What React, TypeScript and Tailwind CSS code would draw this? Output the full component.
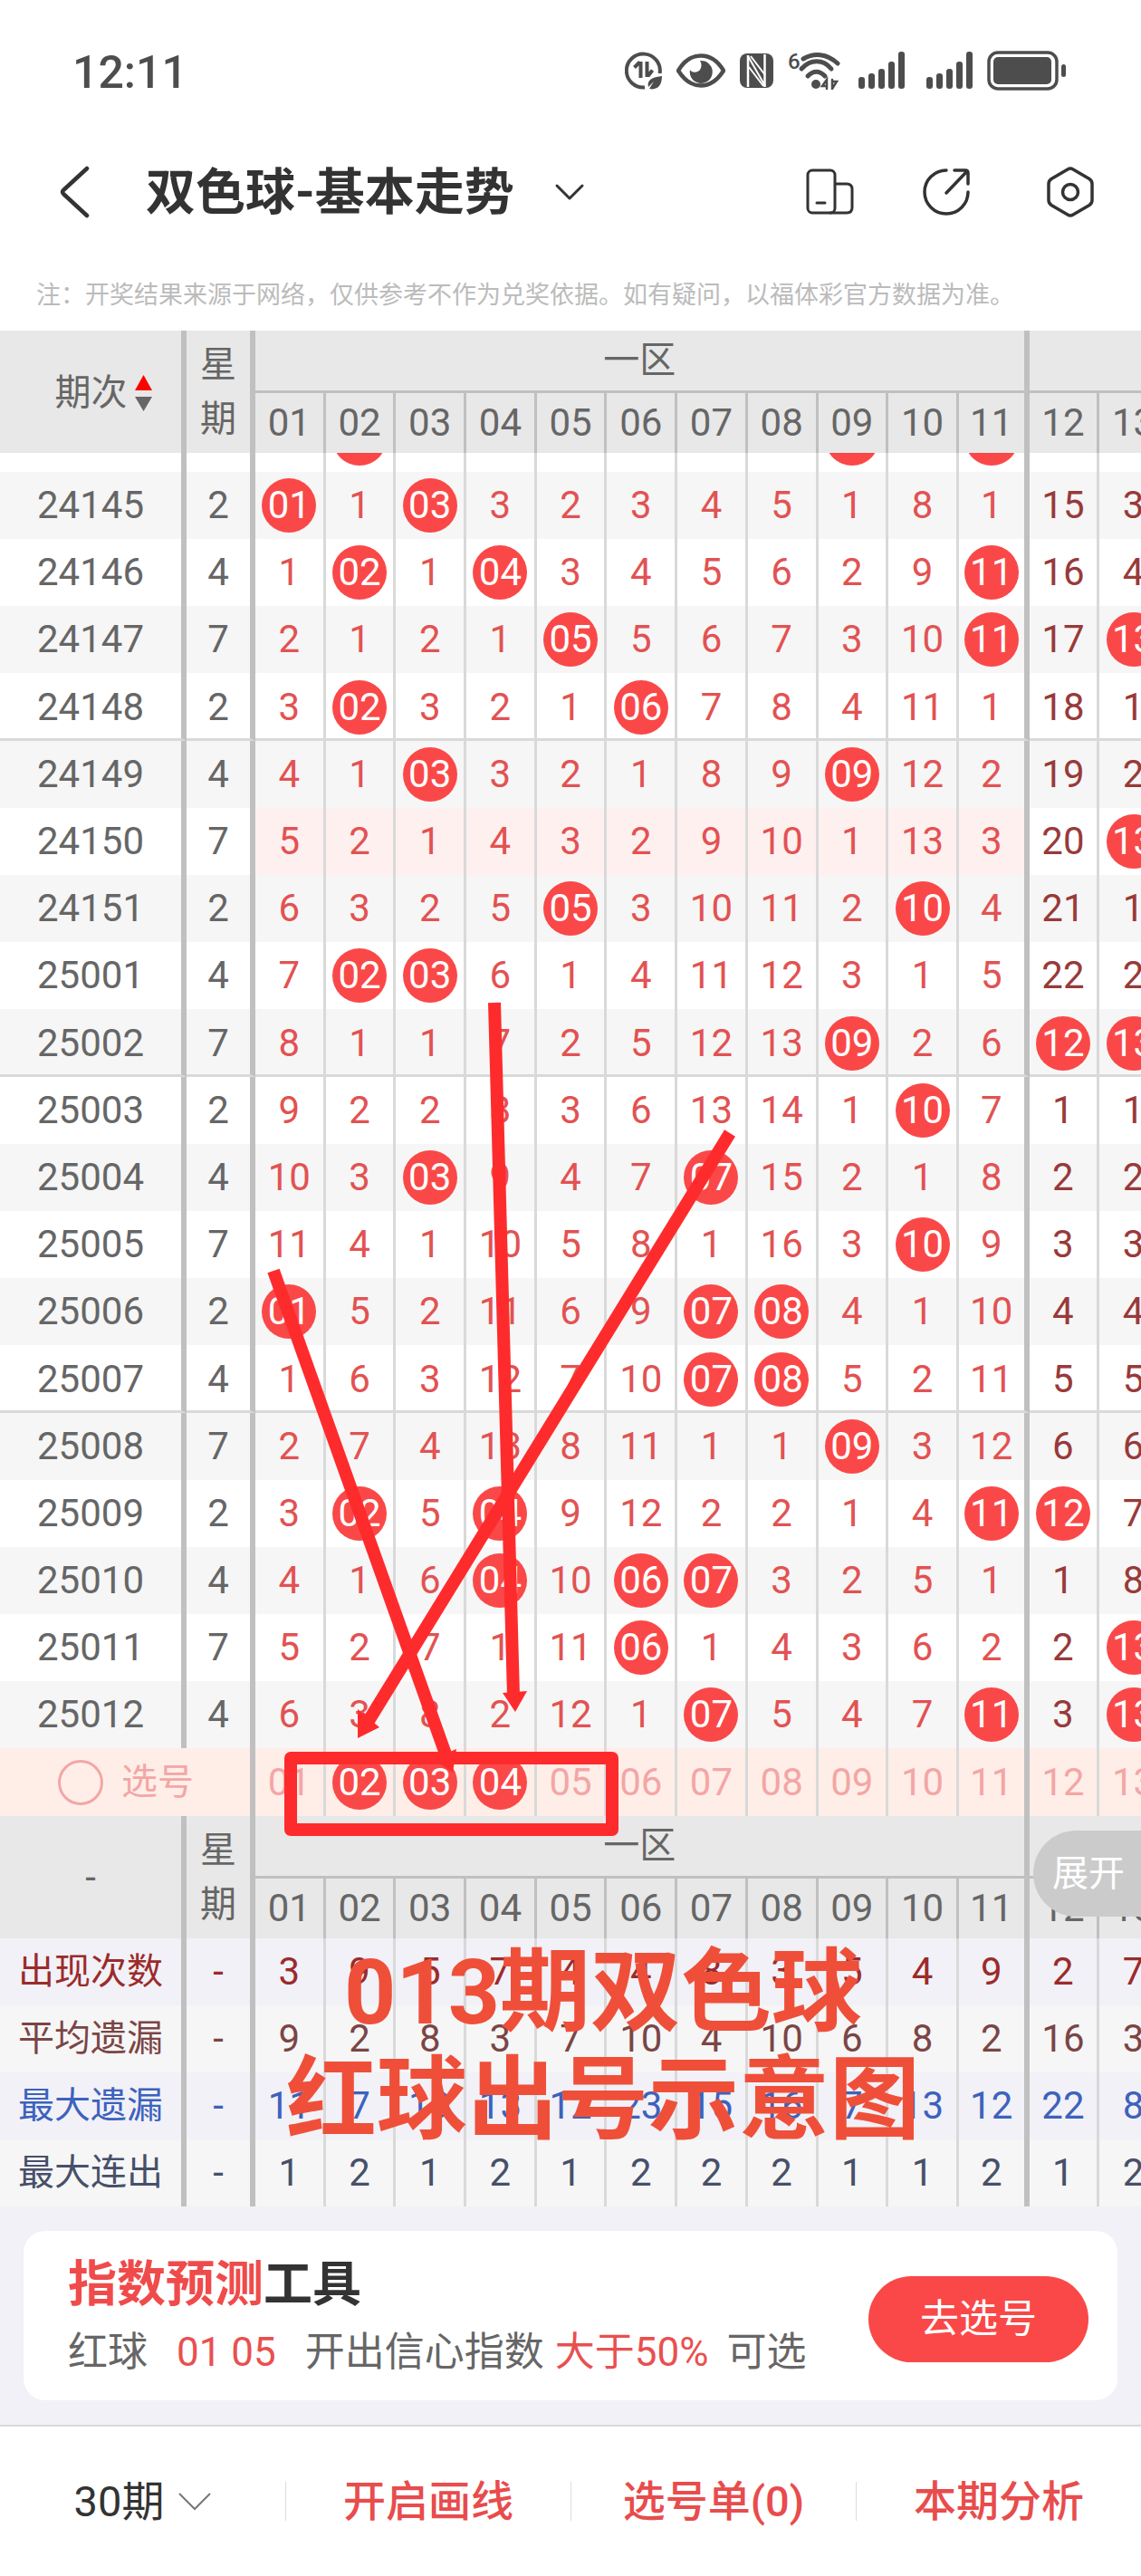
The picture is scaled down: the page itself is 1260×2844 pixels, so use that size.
import { useState } from 'react'
import type { ReactNode } from 'react'

interface Draw {
  issue: string
  day: number
  // misses per number, 0 means the number was drawn
  cells: number[]
}

interface StatRow {
  label: string
  className: string
  values: number[]
}

const NUMBERS = ['01', '02', '03', '04', '05', '06', '07', '08', '09', '10', '11', '12', '13']

const ZONE_ONE = 11

const draws: Draw[] = [
  { issue: '24145', day: 2, cells: [0, 1, 0, 3, 2, 3, 4, 5, 1, 8, 1, 15, 3] },
  { issue: '24146', day: 4, cells: [1, 0, 1, 0, 3, 4, 5, 6, 2, 9, 0, 16, 4] },
  { issue: '24147', day: 7, cells: [2, 1, 2, 1, 0, 5, 6, 7, 3, 10, 0, 17, 0] },
  { issue: '24148', day: 2, cells: [3, 0, 3, 2, 1, 0, 7, 8, 4, 11, 1, 18, 1] },
  { issue: '24149', day: 4, cells: [4, 1, 0, 3, 2, 1, 8, 9, 0, 12, 2, 19, 2] },
  { issue: '24150', day: 7, cells: [5, 2, 1, 4, 3, 2, 9, 10, 1, 13, 3, 20, 0] },
  { issue: '24151', day: 2, cells: [6, 3, 2, 5, 0, 3, 10, 11, 2, 0, 4, 21, 1] },
  { issue: '25001', day: 4, cells: [7, 0, 0, 6, 1, 4, 11, 12, 3, 1, 5, 22, 2] },
  { issue: '25002', day: 7, cells: [8, 1, 1, 7, 2, 5, 12, 13, 0, 2, 6, 0, 0] },
  { issue: '25003', day: 2, cells: [9, 2, 2, 8, 3, 6, 13, 14, 1, 0, 7, 1, 1] },
  { issue: '25004', day: 4, cells: [10, 3, 0, 9, 4, 7, 0, 15, 2, 1, 8, 2, 2] },
  { issue: '25005', day: 7, cells: [11, 4, 1, 10, 5, 8, 1, 16, 3, 0, 9, 3, 3] },
  { issue: '25006', day: 2, cells: [0, 5, 2, 11, 6, 9, 0, 0, 4, 1, 10, 4, 4] },
  { issue: '25007', day: 4, cells: [1, 6, 3, 12, 7, 10, 0, 0, 5, 2, 11, 5, 5] },
  { issue: '25008', day: 7, cells: [2, 7, 4, 13, 8, 11, 1, 1, 0, 3, 12, 6, 6] },
  { issue: '25009', day: 2, cells: [3, 0, 5, 0, 9, 12, 2, 2, 1, 4, 0, 0, 7] },
  { issue: '25010', day: 4, cells: [4, 1, 6, 0, 10, 0, 0, 3, 2, 5, 1, 1, 8] },
  { issue: '25011', day: 7, cells: [5, 2, 7, 1, 11, 0, 1, 4, 3, 6, 2, 2, 0] },
  { issue: '25012', day: 4, cells: [6, 3, 8, 2, 12, 1, 0, 5, 4, 7, 0, 3, 0] },
]

const stats: StatRow[] = [
  { label: '出现次数', className: 'bg-[#f1f1f7] text-[#9b2b2b]', values: [3, 9, 5, 7, 4, 4, 8, 3, 5, 4, 9, 2, 7] },
  { label: '平均遗漏', className: 'bg-[#f6f6f6] text-[#7b4545]', values: [9, 2, 8, 3, 7, 10, 4, 10, 6, 8, 2, 16, 3] },
  { label: '最大遗漏', className: 'bg-[#f1f1f7] text-[#3d62bd]', values: [11, 7, 19, 13, 12, 23, 15, 16, 7, 13, 12, 22, 8] },
  { label: '最大连出', className: 'bg-[#f6f6f6] text-[#475069]', values: [1, 2, 1, 2, 1, 2, 2, 2, 1, 1, 2, 1, 2] },
]

// the last column of a zone gets the thick divider
const bodyLine = (i: number) =>
  i === ZONE_ONE - 1 ? 'border-r-[6px] border-r-[#c0c0c0]' : 'border-r-[3px] border-r-[#d9d9d9]'

const headLine = (i: number) =>
  i === ZONE_ONE - 1 ? 'border-r-[6px] border-r-[#c0c0c0]' : 'border-r-[3px] border-r-[#c0c0c0]'

function StatusBar() {
  return (
    <div className="flex h-[156px] items-center justify-between pl-20 pr-[83px] text-[#4d4d4d]">
      <span className="pt-1 text-[50px] font-medium leading-none">12:11</span>
      <div className="flex items-center gap-4">
        <svg width="41" height="42" viewBox="0 0 41 42" fill="none" stroke="currentColor">
          <path d="M22 39.5A18.5 18.5 0 1 1 38.600 24" strokeWidth="4" />
          <path d="M17.500 11v18M10.500 17.500l6-6" strokeWidth="4" />
          <path d="M24.500 11v17M30.500 20.500l-5 6.500" strokeWidth="4" />
          <path d="M41 27c-10 1-17 4-15 12l6-6-5 8c9 2 14-4 14-14z" fill="currentColor" stroke="none" />
        </svg>
        <svg width="54" height="38" viewBox="0 0 54 38">
          <path d="M2 19C9 7 17 2.500 27 2.500S45 7 52 19C45 30 37 35.500 27 35.500S9 30 2 19z" fill="none" stroke="currentColor" strokeWidth="4.500" strokeLinejoin="round" />
          <path d="M26 8a12.500 12.500 0 1 1-11 10c1 3 8 4 11 0 2-3 2-7 0-10z" fill="currentColor" />
        </svg>
        <svg width="37" height="38" viewBox="0 0 37 38">
          <rect width="37" height="38" rx="8" fill="currentColor" />
          <path d="M9 2v35M27.500 37V1" stroke="#fff" strokeWidth="2.500" />
          <path d="M9 3l19 33M10 15l16 21M12 3l16 21" stroke="#fff" strokeWidth="2" />
        </svg>
        <svg width="58" height="42" viewBox="0 0 58 42" fill="none" stroke="currentColor" strokeWidth="5" strokeLinecap="round">
          <text x="0" y="19" fontSize="24" fontWeight="500" fill="currentColor" stroke="none">6</text>
          <path d="M17 8c12-7 26-6 38 5" />
          <path d="M15 19c10-11 24-11 33 0" />
          <path d="M22 27c6-6.500 13-6.500 19 0" />
          <circle cx="31" cy="36" r="5" fill="currentColor" stroke="none" />
          <path d="M43 41V31l-5 7h5M49 31v10l5-8h-4" strokeWidth="2.500" />
        </svg>
        <Signal className="ml-1" />
        <Signal className="ml-2" />
        <svg width="87" height="44" viewBox="0 0 87 44" fill="none">
          <rect x="2" y="2" width="75" height="40" rx="10" stroke="currentColor" strokeWidth="3.500" />
          <rect x="7" y="7" width="64" height="30" rx="5" fill="currentColor" />
          <rect x="82" y="15" width="5" height="14" rx="2.500" fill="currentColor" />
        </svg>
      </div>
    </div>
  )
}

function Signal({ className }: { className: string }) {
  return (
    <svg className={className} width="51" height="42" viewBox="0 0 51 42" fill="currentColor">
      <rect x="0" y="28" width="7" height="13" rx="3" />
      <rect x="11" y="24" width="7" height="17" rx="3" />
      <rect x="22" y="19" width="7" height="22" rx="3" />
      <rect x="33" y="11" width="7" height="30" rx="3" />
      <rect x="44" y="0" width="7" height="41" rx="3" />
    </svg>
  )
}

function NavBar() {
  return (
    <header className="flex h-28 items-center pl-16 pr-[50px] text-[#333]">
      <button type="button" aria-label="返回" className="mr-[61px]">
        <svg width="36" height="58" viewBox="0 0 36 58" fill="none" stroke="currentColor" strokeWidth="4.500" strokeLinecap="round" strokeLinejoin="round">
          <path d="M32 3L6.500 26.500q-3 2.500 0 5L32 55" />
        </svg>
      </button>
      <h1 className="text-[55px] font-bold leading-none">双色球-基本走势</h1>
      <button type="button" aria-label="切换走势" className="ml-11">
        <svg width="34" height="20" viewBox="0 0 34 20" fill="none" stroke="currentColor" strokeWidth="3" strokeLinecap="round" strokeLinejoin="round">
          <path d="M3 3l14 14L31 3" />
        </svg>
      </button>
      <div className="ml-auto flex gap-[73px]">
        <button type="button" aria-label="横屏">
          <svg width="56" height="56" viewBox="0 0 56 56" fill="none" stroke="currentColor" strokeWidth="3" strokeLinecap="round">
            <rect x="4" y="4" width="30" height="47" rx="5" />
            <path d="M35 19h12q6 0 6 6v20q0 6-6 6H29M14 40h9" />
          </svg>
        </button>
        <button type="button" aria-label="分享">
          <svg width="56" height="56" viewBox="0 0 56 56" fill="none" stroke="currentColor" strokeWidth="3.500" strokeLinecap="round" strokeLinejoin="round">
            <path d="M28 4a24 24 0 1 0 24 24" />
            <path d="M28 29L51 5M37 4h12q3 0 3 3v12" />
          </svg>
        </button>
        <button type="button" aria-label="设置" className="ml-2">
          <svg width="56" height="56" viewBox="0 0 56 56" fill="none" stroke="currentColor" strokeWidth="3.500" strokeLinejoin="round">
            <path d="M25 3q3-2 6 0l18 10.500q3 2 3 5.500v18q0 3.500-3 5.500L31 53q-3 2-6 0L7 42.500q-3-2-3-5.500V19q0-3.500 3-5.500z" />
            <circle cx="28" cy="28" r="8.500" />
          </svg>
        </button>
      </div>
    </header>
  )
}

function Ball({ children }: { children?: ReactNode }) {
  return (
    <span className="mx-auto flex size-[60px] shrink-0 items-center justify-center rounded-full bg-[#fa4848] text-white">
      {children}
    </span>
  )
}

function HeadRows({ first }: { first: ReactNode }) {
  return (
    <>
      <tr className="h-[69px] bg-[#e8e8e8] text-[#666]">
        <th rowSpan={2} className="border-r-[6px] border-[#c0c0c0] font-normal">{first}</th>
        <th rowSpan={2} className="border-r-[6px] border-[#c0c0c0] text-[40px] font-normal leading-[60px]">
          星<br />期
        </th>
        <th colSpan={ZONE_ONE} className="border-r-[6px] border-b-[3px] border-[#c0c0c0] text-[40px] font-normal">一区</th>
        <th colSpan={NUMBERS.length - ZONE_ONE} className="border-b-[3px] border-[#c0c0c0]" />
      </tr>
      <tr className="h-[66px] bg-[#e8e8e8] text-[#666]">
        {NUMBERS.map((n, i) => (
          <th key={n} className={`font-normal ${headLine(i)}`}>{n}</th>
        ))}
      </tr>
    </>
  )
}

function DrawRow({ draw, index }: { draw: Draw; index: number }) {
  const groupEnd = index % 5 === 3 && index < draws.length - 1
  const stripe = index % 2 === 0 ? 'bg-[#f6f6f6]' : 'bg-white'
  const line = groupEnd ? 'border-b-[3px] border-b-[#d9d9d9] pt-[3px]' : ''
  // no ball landed in zone one
  const empty = draw.cells.slice(0, ZONE_ONE).every((c) => c > 0)

  return (
    <tr className={`${groupEnd ? 'h-[75px]' : 'h-[74px]'} ${stripe}`}>
      <td className={`border-r-[6px] border-r-[#c0c0c0] text-[#666] ${line}`}>{draw.issue}</td>
      <td className={`border-r-[6px] border-r-[#c0c0c0] text-[#666] ${line}`}>{draw.day}</td>
      {draw.cells.map((c, i) => (
        <td
          key={NUMBERS[i]}
          className={`${bodyLine(i)} ${line} ${i < ZONE_ONE ? 'text-[#e25252]' : 'text-[#983a3a]'} ${empty && i < ZONE_ONE ? 'bg-[#fff0f0]' : ''}`}
        >
          {c === 0 ? <Ball>{NUMBERS[i]}</Ball> : c}
        </td>
      ))}
    </tr>
  )
}

function Annotations() {
  return (
    <>
      <svg className="pointer-events-none absolute left-0 top-0" width="1260" height="2072" viewBox="0 365 1260 2072" fill="none" stroke="#fe2b2d" strokeWidth="14">
        <path d="M546 1107L567 1872" />
        <path d="M806 1251L402 1908" />
        <path d="M302 1403L494 1942" />
        <g fill="#fe2b2d" stroke="none">
          <path d="M555 1869L582 1867L569 1890z" />
          <path d="M395 1887L395 1919L419 1907z" />
          <path d="M478 1942L504 1931L500 1957z" />
        </g>
        <rect x="321" y="1941" width="355" height="79" strokeLinejoin="round" />
      </svg>
      <p className="pointer-events-none absolute bottom-[58px] left-[315px] w-[702px] text-center text-[100px] font-bold leading-[119px] text-[#ef4f39]">
        013期双色球<br />红球出号示意图
      </p>
    </>
  )
}

function TrendTable() {
  const [picked, setPicked] = useState(['02', '03', '04'])

  const toggle = (n: string) =>
    setPicked(picked.includes(n) ? picked.filter((p) => p !== n) : [...picked, n])

  return (
    <section className="relative overflow-hidden">
      <table className="w-[calc(100%+32px)] table-fixed border-separate border-spacing-0 text-center text-[42px] leading-none">
        <colgroup>
          <col className="w-[206px]" />
          <col className="w-[76px]" />
          {NUMBERS.map((n) => (
            <col key={n} />
          ))}
        </colgroup>
        <thead>
          <HeadRows
            first={
              <button type="button" className="inline-flex items-center gap-2 pl-7 text-[40px]">
                期次
                <svg width="19" height="40" viewBox="0 0 19 40">
                  <path d="M9.500 0L19 17H0z" fill="#f00" />
                  <path d="M9.500 40L0 24h19z" fill="#666" />
                </svg>
              </button>
            }
          />
        </thead>
        <tbody>
          <tr className="bg-white">
            <td className="border-r-[6px] border-r-[#c0c0c0]" />
            <td className="border-r-[6px] border-r-[#c0c0c0]" />
            {NUMBERS.map((n, i) => (
              <td key={n} className={bodyLine(i)}>
                <div className="flex h-[21px] items-end overflow-hidden pb-[7px]">
                  {['02', '09', '11'].includes(n) && <Ball />}
                </div>
              </td>
            ))}
          </tr>
          {draws.map((d, i) => (
            <DrawRow key={d.issue} draw={d} index={i} />
          ))}
          <tr className="h-[75px] bg-[#ffeee8] text-[#f3a6a6]">
            <td colSpan={2} className="border-r-[6px] border-r-[#c0c0c0]">
              <label className="flex items-center gap-5 pl-16 text-[40px]">
                <input type="radio" name="pick" className="size-[50px] appearance-none rounded-full border-[3px] border-[#f3a6a6]" />
                选号
              </label>
            </td>
            {NUMBERS.map((n, i) => (
              <td key={n} className={bodyLine(i)}>
                <button type="button" onClick={() => toggle(n)} className="block w-full">
                  {picked.includes(n) ? <Ball>{n}</Ball> : n}
                </button>
              </td>
            ))}
          </tr>
          <HeadRows first="-" />
          {stats.map((s) => (
            <tr key={s.label} className={`h-[74px] ${s.className}`}>
              <td className="border-r-[6px] border-r-[#c0c0c0] text-[40px]">{s.label}</td>
              <td className="border-r-[6px] border-r-[#c0c0c0]">-</td>
              {s.values.map((v, i) => (
                <td key={NUMBERS[i]} className={bodyLine(i)}>{v}</td>
              ))}
            </tr>
          ))}
        </tbody>
      </table>
      <Annotations />
      <button type="button" className="absolute bottom-80 right-0 h-[95px] rounded-l-full bg-[#cbcbcb] pl-[21px] pr-[18px] text-[40px] leading-none text-white">
        展开
      </button>
    </section>
  )
}

function PredictCard() {
  return (
    <section className="bg-[#f1f1f7] px-[26px] py-[27px]">
      <div className="flex items-center justify-between rounded-3xl bg-white pb-4 pl-[49px] pr-8 pt-[23px]">
        <div>
          <h2 className="text-[54px] font-bold leading-[74px] text-[#333]">
            <span className="text-[#f04b4b]">指数预测</span>工具
          </h2>
          <p className="flex text-[44px] leading-[74px] text-[#666]">
            <span className="mr-8">红球</span>
            <span className="mr-8 text-[#e85050]">01 05</span>
            <span className="mr-3">开出信心指数</span>
            <span className="mr-5 text-[#e85050]">大于50%</span>
            <span>可选</span>
          </p>
        </div>
        <button type="button" className="h-[95px] w-[243px] rounded-full bg-[#fa4848] text-[43px] leading-none text-white">
          去选号
        </button>
      </div>
    </section>
  )
}

function BottomBar() {
  return (
    <footer className="grid grid-cols-4 border-t-2 border-[#d9d9dc] pb-[63px] pt-[61px] text-[47px] font-medium leading-[43px] text-[#e84c4c]">
      <div className="flex items-center justify-center gap-4 text-[#333]">
        <select aria-label="期数" defaultValue="30" className="field-sizing-content appearance-none font-normal">
          <option value="30">30期</option>
          <option value="50">50期</option>
          <option value="100">100期</option>
        </select>
        <svg width="36" height="20" viewBox="0 0 36 20" fill="none" stroke="#777" strokeWidth="2">
          <path d="M1 1l17 17L35 1" />
        </svg>
      </div>
      <button type="button" className="border-l border-[#ddd]">开启画线</button>
      <button type="button" className="border-l border-[#ddd]">选号单(0)</button>
      <button type="button" className="border-l border-[#ddd]">本期分析</button>
    </footer>
  )
}

export default function App() {
  return (
    <div className="min-h-screen overflow-hidden bg-white font-['Roboto','Noto_Sans_CJK_SC',sans-serif]" lang="zh-CN">
      <StatusBar />
      <NavBar />
      <p className="pb-[22px] pl-10 pt-[41px] text-[27px] leading-[34px] text-[#bbb]">
        注：开奖结果来源于网络，仅供参考不作为兑奖依据。如有疑问，以福体彩官方数据为准。
      </p>
      <TrendTable />
      <PredictCard />
      <BottomBar />
    </div>
  )
}
